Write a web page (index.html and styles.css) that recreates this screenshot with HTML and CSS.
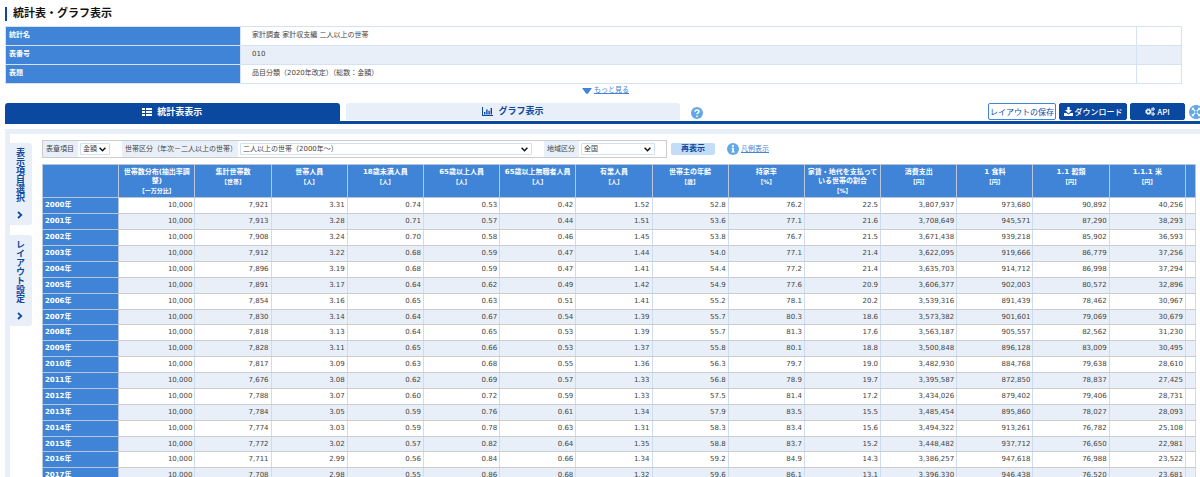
FILE: index.html
```html
<!DOCTYPE html>
<html lang="ja">
<head>
<meta charset="utf-8">
<title>統計表・グラフ表示</title>
<link rel="stylesheet" href="styles.css">
</head>
<body>
<h1 class="page-title">統計表・グラフ表示</h1>
<table class="info">
<colgroup><col class="info-name"><col><col class="info-end"></colgroup>
<tr><th scope="row">統計名</th><td>家計調査 家計収支編 二人以上の世帯</td><td></td></tr>
<tr><th scope="row">表番号</th><td>010</td><td></td></tr>
<tr><th scope="row">表題</th><td>品目分類（2020年改定）（総数：金額）</td><td></td></tr>
</table>
<div class="more"><svg width="10" height="6" viewBox="0 0 10 6"><path d="M0 0h10L6 5.4q-1 .9-2 0z" fill="#4084d7"/></svg><a href="#">もっと見る</a></div>
<div class="tabbar">
  <button class="tab tab-active" type="button"><svg width="10" height="8" viewBox="0 0 10 8"><path fill="currentColor" d="M0 0h3v2H0zM4 0h6v2H4zM0 3h3v2H0zM4 3h6v2H4zM0 6h3v2H0zM4 6h6v2H4z"/></svg>統計表表示</button>
  <button class="tab" type="button"><svg width="11" height="9" viewBox="0 0 11 9"><path fill="currentColor" d="M0 0h1v8h10v1H0zM2 5h1.4v2.500H2zM4.200 2.500h1.400v5H4.200zM6.400 3.800h1.400v3.700H6.400zM8.600 1H10v6.500H8.600z"/></svg>グラフ表示</button>
  <a class="help" href="#" aria-label="ヘルプ"><svg width="12" height="12" viewBox="0 0 12 12"><circle cx="6" cy="6" r="6" fill="#62a8e5"/><path d="M4 4.700C4 2.300 8 2.300 8 4.600 8 5.900 6 5.800 6 7.300" fill="none" stroke="#fff" stroke-width="1.500"/><circle cx="6" cy="9.300" r=".9" fill="#fff"/></svg></a>
  <div class="actions">
    <button class="action action-light" type="button">レイアウトの保存</button>
    <button class="action action-download" type="button"><svg width="9" height="9" viewBox="0 0 9 9"><path fill="currentColor" d="M3.300 0h2.400v3H8L4.500 6.400 1 3h2.300zM0 6h2.400l2.100 1.500L6.600 6H9v3H0z"/></svg>ダウンロード</button>
    <button class="action action-api" type="button"><svg width="10" height="9" viewBox="0 0 10 9"><g fill="none" stroke="currentColor"><circle cx="3.400" cy="4.600" r="1.900" stroke-width="1.400"/><circle cx="3.400" cy="4.600" r="2.900" stroke-width=".9" stroke-dasharray="1.200 1.078"/><circle cx="8" cy="2.100" r="1.100"/><circle cx="8" cy="2.100" r="1.700" stroke-width=".6" stroke-dasharray=".9 .88"/><circle cx="8" cy="7" r="1.100"/><circle cx="8" cy="7" r="1.700" stroke-width=".6" stroke-dasharray=".9 .88"/></g></svg>API</button>
    <a class="expand" href="#" aria-label="拡大"><svg width="14" height="14" viewBox="0 0 14 14"><circle cx="7" cy="7" r="7" fill="#62a8e5"/><path d="M2.800 5.500V2.800h2.700zM8.500 2.800h2.700v2.700zM2.800 8.500v2.700h2.700zM11.200 8.500v2.700H8.500z" fill="#fff"/><path d="M3.500 3.500l7 7M10.500 3.500l-7 7" stroke="#fff" stroke-width="1.200"/><path d="M7 5.500L8.500 7 7 8.500 5.500 7z" fill="#62a8e5"/></svg></a>
  </div>
</div>
<main class="frame">
  <nav class="side">
    <button class="side-tab" type="button">表示項目選択<svg width="6" height="8" viewBox="0 0 6 8"><path d="M1 1l3.300 3L1 7" fill="none" stroke="currentColor" stroke-width="1.700"/></svg></button>
    <button class="side-tab" type="button">レイアウト設定<svg width="6" height="8" viewBox="0 0 6 8"><path d="M1 1l3.300 3L1 7" fill="none" stroke="currentColor" stroke-width="1.700"/></svg></button>
  </nav>
  <section class="content">
    <div class="filters">
      <div class="filter-box">
        <label class="item" for="f1">表章項目</label>
        <span class="pick pick-s"><select id="f1"><option>金額</option></select><svg class="chev" width="7" height="5" viewBox="0 0 7 5"><path d="M.6.8l2.900 2.900L6.400.8" fill="none" stroke="#111" stroke-width="1.500"/></svg></span>
        <label class="item item-wide" for="f2">世帯区分（年次－二人以上の世帯）</label>
        <span class="pick pick-l"><select id="f2"><option>二人以上の世帯（2000年～）</option></select><svg class="chev" width="7" height="5" viewBox="0 0 7 5"><path d="M.6.8l2.900 2.900L6.400.8" fill="none" stroke="#111" stroke-width="1.500"/></svg></span>
        <label class="item" for="f3">地域区分</label>
        <span class="pick pick-m"><select id="f3"><option>全国</option></select><svg class="chev" width="7" height="5" viewBox="0 0 7 5"><path d="M.6.8l2.900 2.900L6.400.8" fill="none" stroke="#111" stroke-width="1.500"/></svg></span>
      </div>
      <button class="redraw" type="button">再表示</button>
      <a class="legend" href="#"><svg width="12" height="12" viewBox="0 0 12 12"><circle cx="6" cy="6" r="6" fill="#62a8e5"/><circle cx="6" cy="2.900" r="1.100" fill="#fff"/><path d="M4.500 4.800h2.400v3.700h.8v1H4.400v-1h.8V5.800h-.7z" fill="#fff"/></svg><span>凡例表示</span></a>
    </div>
    <table class="data">
      <colgroup><col span="15"><col class="col-cut"></colgroup>
      <thead><tr><th></th><th>世帯数分布(抽出率調整)<small>【一万分比】</small></th><th>集計世帯数<small>【世帯】</small></th><th>世帯人員<small>【人】</small></th><th>18歳未満人員<small>【人】</small></th><th>65歳以上人員<small>【人】</small></th><th>65歳以上無職者人員<small>【人】</small></th><th>有業人員<small>【人】</small></th><th>世帯主の年齢<small>【歳】</small></th><th>持家率<small>【%】</small></th><th>家賃・地代を支払っている世帯の割合<small>【%】</small></th><th>消費支出<small>【円】</small></th><th>1 食料<small>【円】</small></th><th>1.1 穀類<small>【円】</small></th><th>1.1.1 米<small>【円】</small></th><th></th></tr></thead>
      <tbody>
<tr><th>2000年<td>10,000<td>7,921<td>3.31<td>0.74<td>0.53<td>0.42<td>1.52<td>52.8<td>76.2<td>22.5<td>3,807,937<td>973,680<td>90,892<td>40,256<td>
<tr><th>2001年<td>10,000<td>7,913<td>3.28<td>0.71<td>0.57<td>0.44<td>1.51<td>53.6<td>77.1<td>21.6<td>3,708,649<td>945,571<td>87,290<td>38,293<td>
<tr><th>2002年<td>10,000<td>7,908<td>3.24<td>0.70<td>0.58<td>0.46<td>1.45<td>53.8<td>76.7<td>21.5<td>3,671,438<td>939,218<td>85,902<td>36,593<td>
<tr><th>2003年<td>10,000<td>7,912<td>3.22<td>0.68<td>0.59<td>0.47<td>1.44<td>54.0<td>77.1<td>21.4<td>3,622,095<td>919,666<td>86,779<td>37,256<td>
<tr><th>2004年<td>10,000<td>7,896<td>3.19<td>0.68<td>0.59<td>0.47<td>1.41<td>54.4<td>77.2<td>21.4<td>3,635,703<td>914,712<td>86,998<td>37,294<td>
<tr><th>2005年<td>10,000<td>7,891<td>3.17<td>0.64<td>0.62<td>0.49<td>1.42<td>54.9<td>77.6<td>20.9<td>3,606,377<td>902,003<td>80,572<td>32,896<td>
<tr><th>2006年<td>10,000<td>7,854<td>3.16<td>0.65<td>0.63<td>0.51<td>1.41<td>55.2<td>78.1<td>20.2<td>3,539,316<td>891,439<td>78,462<td>30,967<td>
<tr><th>2007年<td>10,000<td>7,830<td>3.14<td>0.64<td>0.67<td>0.54<td>1.39<td>55.7<td>80.3<td>18.6<td>3,573,382<td>901,601<td>79,069<td>30,679<td>
<tr><th>2008年<td>10,000<td>7,818<td>3.13<td>0.64<td>0.65<td>0.53<td>1.39<td>55.7<td>81.3<td>17.6<td>3,563,187<td>905,557<td>82,562<td>31,230<td>
<tr><th>2009年<td>10,000<td>7,828<td>3.11<td>0.65<td>0.66<td>0.53<td>1.37<td>55.8<td>80.1<td>18.8<td>3,500,848<td>896,128<td>83,009<td>30,495<td>
<tr><th>2010年<td>10,000<td>7,817<td>3.09<td>0.63<td>0.68<td>0.55<td>1.36<td>56.3<td>79.7<td>19.0<td>3,482,930<td>884,768<td>79,638<td>28,610<td>
<tr><th>2011年<td>10,000<td>7,676<td>3.08<td>0.62<td>0.69<td>0.57<td>1.33<td>56.8<td>78.9<td>19.7<td>3,395,587<td>872,850<td>78,837<td>27,425<td>
<tr><th>2012年<td>10,000<td>7,788<td>3.07<td>0.60<td>0.72<td>0.59<td>1.33<td>57.5<td>81.4<td>17.2<td>3,434,026<td>879,402<td>79,406<td>28,731<td>
<tr><th>2013年<td>10,000<td>7,784<td>3.05<td>0.59<td>0.76<td>0.61<td>1.34<td>57.9<td>83.5<td>15.5<td>3,485,454<td>895,860<td>78,027<td>28,093<td>
<tr><th>2014年<td>10,000<td>7,774<td>3.03<td>0.59<td>0.78<td>0.63<td>1.31<td>58.3<td>83.4<td>15.6<td>3,494,322<td>913,261<td>76,782<td>25,108<td>
<tr><th>2015年<td>10,000<td>7,772<td>3.02<td>0.57<td>0.82<td>0.64<td>1.35<td>58.8<td>83.7<td>15.2<td>3,448,482<td>937,712<td>76,650<td>22,981<td>
<tr><th>2016年<td>10,000<td>7,711<td>2.99<td>0.56<td>0.84<td>0.66<td>1.34<td>59.2<td>84.9<td>14.3<td>3,386,257<td>947,618<td>76,988<td>23,522<td>
<tr><th>2017年<td>10,000<td>7,708<td>2.98<td>0.55<td>0.86<td>0.68<td>1.32<td>59.6<td>86.1<td>13.1<td>3,396,330<td>946,438<td>76,520<td>23,681<td>
      </tbody>
    </table>
  </section>
</main>
</body>
</html>
```
FILE: styles.css
```css
* { box-sizing: border-box; }
body {
  margin: 0;
  padding: 7px 0 0 5px;
  height: 100vh;
  overflow: hidden;
  background: #fff;
  color: #444;
  font: 7px/9px "DejaVu Sans", "Noto Sans CJK JP", sans-serif;
}
button, select { font: inherit; color: inherit; margin: 0; padding: 0; }
button { border: 0; cursor: pointer; }
svg { display: block; flex: none; }
table { border-collapse: collapse; table-layout: fixed; }
a { color: #4084d7; }

.page-title {
  margin: 0 0 5px;
  padding-left: 6px;
  border-left: 2px solid #0b489f;
  color: #111;
  font-size: 11px;
  line-height: 14px;
}

.info { width: calc(100% - 18px); border: 1px solid #dfe9f7; }
.info-name { width: 235px; }
.info-end { width: 45px; }
.info th, .info td { padding: 4px 3px 5px; border: 1px solid #d5e2f4; text-align: left; }
.info th { background: #4084d7; color: #fff; }
.info td { padding-left: 11px; }
.info tr:nth-child(even) td { background: #e8eff8; }

.more { display: flex; justify-content: center; align-items: center; gap: 2px; margin-left: 6px; padding: 2px 0 8px; }

.tabbar { display: flex; align-items: flex-start; border-bottom: 3px solid #0b489f; }
.tab {
  display: flex;
  justify-content: center;
  align-items: center;
  gap: 5px;
  width: 28%;
  min-height: 17px;
  margin-right: 6px;
  border-radius: 3px 3px 0 0;
  background: #e8eff8;
  color: #0b489f;
  font-size: 9px;
  line-height: 13px;
  font-weight: bold;
}
.tab-active { min-height: 18px; background: #0b489f; color: #fff; }
.help { margin: 4px 0 0 5px; }
.actions { display: flex; gap: 3px; margin-left: auto; margin-right: -3px; }
.action {
  display: flex;
  justify-content: center;
  align-items: center;
  gap: 2px;
  min-height: 17px;
  width: 68px;
  border: 1px solid #0b489f;
  border-radius: 2px;
  background: #0b489f;
  color: #fff;
  font-family: "Noto Sans CJK JP", sans-serif;
  font-size: 8px;
  line-height: 12px;
  font-weight: 500;
  white-space: nowrap;
}
.action-light { background: #fff; border-color: #4084d7; color: #0b489f; font-weight: 400; }
.action-api { width: 55px; }
.expand { margin: 2px 0 0 1px; }

.frame {
  display: flex;
  align-items: flex-start;
  margin-top: 5px;
  border: solid #e8eff8;
  border-width: 5px 0 0 5px;
  min-height: 100vh;
}
.side { display: flex; flex-direction: column; gap: 10px; width: 22px; padding-top: 9px; }
.side-tab {
  display: flex;
  align-items: center;
  gap: 9px;
  width: 22px;
  padding: 5px 7px 6px 5px;
  border-radius: 0 3px 3px 0;
  background: #e8eff8;
  color: #0b489f;
  font-size: 9px;
  line-height: 12px;
  font-weight: bold;
  writing-mode: vertical-rl;
}
.content { flex: 1; min-width: 0; padding: 6px 4px 0 10px; }
.filters { display: flex; align-items: center; margin-bottom: 6px; }
.filter-box { display: flex; align-items: center; width: 625px; border: 1px solid #ccc; }
.item { width: 35px; padding: 4px 0 3px 3px; background: #e8eff8; white-space: nowrap; }
.item-wide { width: 116px; }
.pick { position: relative; margin: 0 12px 0 2px; }
.pick select {
  display: block;
  width: 100%;
  height: 12px;
  padding: 0 2px;
  border: 1px solid #cfe0f7;
  border-radius: 1px;
  background: #fff;
  appearance: none;
}
.chev { position: absolute; right: 4px; top: 4px; pointer-events: none; }
.pick-s { width: 30px; }
.pick-l { flex: 1; }
.pick-m { width: 74px; margin-right: 11px; }
.redraw {
  width: 44px;
  margin: 0 12px 0 4px;
  border-radius: 2px;
  background: #c3dcf8;
  color: #0b489f;
  font-size: 8px;
  line-height: 12px;
  font-weight: bold;
}
.legend { display: flex; align-items: center; gap: 2px; }

.data { width: 100%; }
.data .col-cut { width: 10px; }
.data th, .data td { border: 1px solid #cfdcf0; border-top-color: #ccc; border-bottom-color: #ccc; }
.data th { background: #4084d7; color: #fff; border-color: #b9c6d8; }
.data thead th { height: 33px; padding: 3px 2px 1px; vertical-align: top; text-align: center; }
.data small { display: block; font-size: 6px; }
.data tbody th { padding: 3px 2px; text-align: left; }
.data tbody td { padding: 3px 2px; text-align: right; }
.data tbody tr:nth-child(even) td { background: #e8eff8; }
.data tbody tr:nth-child(8n) > * { padding-bottom: 2px; }
```
